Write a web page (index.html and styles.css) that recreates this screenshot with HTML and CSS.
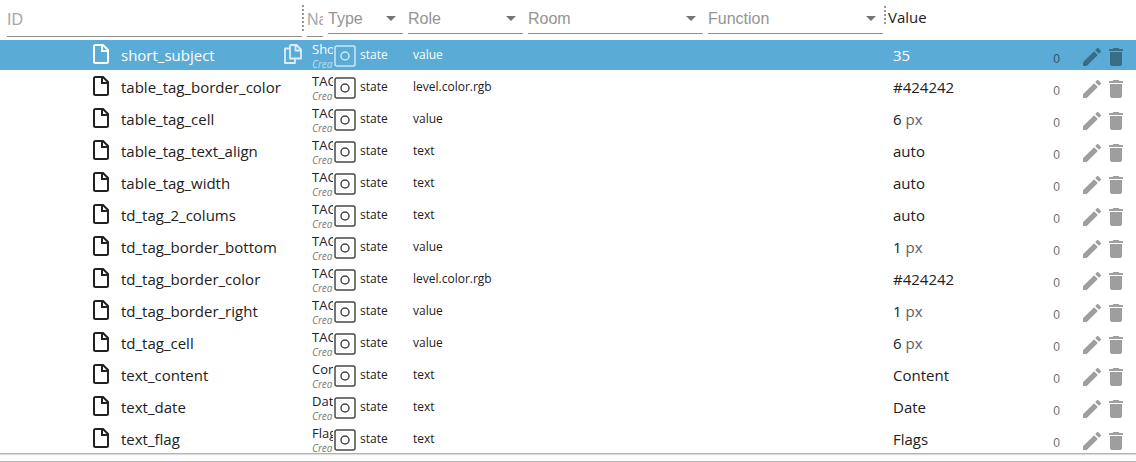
FILE: index.html
```
<!DOCTYPE html>
<html lang="en">
<head>
<meta charset="utf-8">
<title>Objects</title>
<link rel="stylesheet" href="styles.css">
</head>
<body>
<svg class="sprite" aria-hidden="true">
  <symbol id="file" viewBox="0 0 16 20"><path d="M2.5 1H10l5 5v11.500a1.500 1.500 0 0 1-1.500 1.500h-11A1.500 1.500 0 0 1 1 17.500v-15A1.500 1.500 0 0 1 2.500 1zM9 1v6h6" fill="none" stroke="currentColor" stroke-width="2"/></symbol>
  <symbol id="copy" viewBox="0 0 18 20"><path d="M7 1h5.500L17 5.500V14.500H6V2a1 1 0 0 1 1-1zM11.500 1v5.500H17M6 4.500H1V19h10v-4.500" fill="none" stroke="currentColor" stroke-width="1.800" stroke-linejoin="round"/></symbol>
  <symbol id="state" viewBox="0 0 22 22"><rect x="1" y="1" width="20" height="20" rx="2" fill="none" stroke="currentColor" stroke-width="1.500"/><circle cx="11" cy="11" r="4" fill="none" stroke="currentColor" stroke-width="1.500"/></symbol>
  <symbol id="edit" viewBox="3 3 18 18"><path d="M3 17.250V21h3.750L17.810 9.940l-3.750-3.750L3 17.250zM20.710 7.040a1 1 0 0 0 0-1.410l-2.340-2.340a1 1 0 0 0-1.410 0l-1.830 1.830 3.750 3.750 1.830-1.830z" fill="currentColor"/></symbol>
  <symbol id="trash" viewBox="5 3 14 18"><path d="M6 19c0 1.100.900 2 2 2h8c1.100 0 2-.900 2-2V7H6v12zM19 4h-3.500l-1-1h-5l-1 1H5v2h14V4z" fill="currentColor"/></symbol>
</svg>
<main class="panel">
  <header class="filters">
    <div class="field field-text field-id"><input type="text" placeholder="ID" aria-label="ID"></div>
    <div class="field field-text field-name"><input type="text" placeholder="Name" aria-label="Name"></div>
    <div class="field"><select aria-label="Type"><option>Type</option></select></div>
    <div class="field"><select aria-label="Role"><option>Role</option></select></div>
    <div class="field"><select aria-label="Room"><option>Room</option></select></div>
    <div class="field"><select aria-label="Function"><option>Function</option></select></div>
    <div class="value-title">Value</div>
  </header>
  <div class="list">
    <table class="objects" aria-label="Objects">
      <colgroup><col class="col-id"><col class="col-name"><col class="col-type"><col class="col-role"><col class="col-value"><col class="col-actions"></colgroup>
      <tbody id="rows"></tbody>
    </table>
  </div>
</main>
<script src="rows.js"></script>
</body>
</html>
```
FILE: rows.js
```
const objects = [
  ["short_subject", "Short", "value", "35", ""],
  ["table_tag_border_color", "TAG", "level.color.rgb", "#424242", ""],
  ["table_tag_cell", "TAG", "value", "6", "px"],
  ["table_tag_text_align", "TAG", "text", "auto", ""],
  ["table_tag_width", "TAG", "text", "auto", ""],
  ["td_tag_2_colums", "TAG", "text", "auto", ""],
  ["td_tag_border_bottom", "TAG", "value", "1", "px"],
  ["td_tag_border_color", "TAG", "level.color.rgb", "#424242", ""],
  ["td_tag_border_right", "TAG", "value", "1", "px"],
  ["td_tag_cell", "TAG", "value", "6", "px"],
  ["text_content", "Content", "text", "Content", ""],
  ["text_date", "Date", "text", "Date", ""],
  ["text_flag", "Flags", "text", "Flags", ""]
];

const icon = (name) => `<svg class="icon-${name}" aria-hidden="true"><use href="#${name}"/></svg>`;

document.getElementById("rows").innerHTML = objects.map(([id, name, role, value, unit], i) => `
  <tr class="row${i === 0 ? " selected" : ""}">
    <td><div class="cell id">${icon("file")}<span class="id-text">${id}</span>${i === 0 ? `<button class="copy" aria-label="Copy ID">${icon("copy")}</button>` : ""}</div></td>
    <td><div class="name"><span>${name}</span><small>Created</small></div></td>
    <td><div class="cell type">${icon("state")}state</div></td>
    <td><div class="cell role">${role}</div></td>
    <td><div class="cell value">${value}${unit ? `<span class="unit">${unit}</span>` : ""}</div></td>
    <td><div class="cell actions"><span class="access">0</span><button aria-label="Edit ${id}">${icon("edit")}</button><button aria-label="Delete ${id}">${icon("trash")}</button></div></td>
  </tr>`).join("");
```
FILE: styles.css
```
* { box-sizing: border-box; }
body {
  margin: 0;
  background: #fff;
  color: #212121;
  font: 15px/20px "Open Sans", "Noto Sans", sans-serif;
}
.sprite { position: absolute; width: 0; height: 0; }
.panel {
  padding-bottom: 7px;
  border-bottom: 1px solid #b8b8b8;
}
.filters {
  display: grid;
  grid-template-columns: 304px 20px 80px 120px 180px 180px 1fr;
  height: 40px;
}
.field {
  position: relative;
  height: 34px;
  margin-left: 4px;
  margin-right: 1px;
  border-bottom: 1px solid #8e8e8e;
}
.field input, .field select {
  display: block;
  width: 100%;
  height: 38px;
  padding: 0;
  border: 0;
  outline: 0;
  background: none;
  color: #949494;
  font: 16px/20px "Liberation Sans", Arial, sans-serif;
  appearance: none;
}
.field-text { height: 37px; }
.field-id { margin-left: 7px; margin-right: 2px; }
.field-name { margin-left: 3px; }
.field input { height: 40px; }
.field input::placeholder { color: #a6a6a6; opacity: 1; }
.field:has(select)::after {
  content: "";
  position: absolute;
  right: 7px;
  top: 16px;
  border: 5px solid transparent;
  border-top-color: #757575;
  border-bottom: 0;
  pointer-events: none;
}
.field-id::after, .value-title::before {
  content: "";
  position: absolute;
  width: 2px;
  background: repeating-linear-gradient(#999 0 2px, transparent 2px 4px);
}
.field-id::after { top: 5px; right: -2px; height: 26px; }
.value-title { position: relative; padding: 7px 0 0 4px; }
.value-title::before { top: 6px; left: 0; height: 18px; }
.list {
  max-height: 414px;
  overflow: hidden;
  border-bottom: 1px solid #b3b3b3;
  box-shadow: 0 1px 1px #ddd;
}
.objects {
  width: 100%;
  table-layout: fixed;
  border-collapse: collapse;
}
.col-id { width: 304px; }
.col-name { width: 30px; }
.col-type { width: 74px; }
.col-role { width: 480px; }
.col-actions { width: 96px; }
td { padding: 0; border-bottom: 2px solid #fff; }
.selected { background: #5aabd6; color: #fff; }
.cell { display: flex; align-items: center; height: 30px; }
.id { padding-left: 93px; gap: 12px; }
.id-text { flex: 1; }
button {
  display: flex;
  padding: 0;
  border: 0;
  background: none;
  color: inherit;
}
.icon-file { width: 16px; height: 20px; margin-bottom: 2px; }
.icon-copy { width: 18px; height: 20px; }
.copy { margin-right: 2px; margin-bottom: 2px; opacity: 0.8; }
.name {
  height: 30px;
  margin: 0 1px 0 8px;
  overflow: hidden;
  white-space: nowrap;
  font-size: 13px;
  line-height: 18px;
}
.name span, .name small { display: block; }
.name small { font-size: 10px; line-height: 12px; font-style: italic; opacity: 0.6; }
.type { gap: 4px; font-size: 12px; }
.icon-state { width: 22px; height: 22px; margin-top: 2px; color: #484848; }
.selected .icon-state { color: #cde6f3; }
.role { padding-left: 5px; font-size: 12px; }
.value { padding-left: 5px; gap: 4px; }
.unit { color: #616161; }
.actions {
  justify-content: flex-end;
  gap: 8px;
  padding-right: 13px;
  padding-top: 4px;
  color: #9e9e9e;
}
.selected .actions { color: #386d88; }
.access { margin-right: 15px; padding-top: 3px; color: #707070; font: 12px/16px "Liberation Sans", Arial, sans-serif; }
.selected .access { color: #315669; }
.icon-edit { width: 18px; height: 18px; }
.icon-trash { width: 14px; height: 18px; }
```
